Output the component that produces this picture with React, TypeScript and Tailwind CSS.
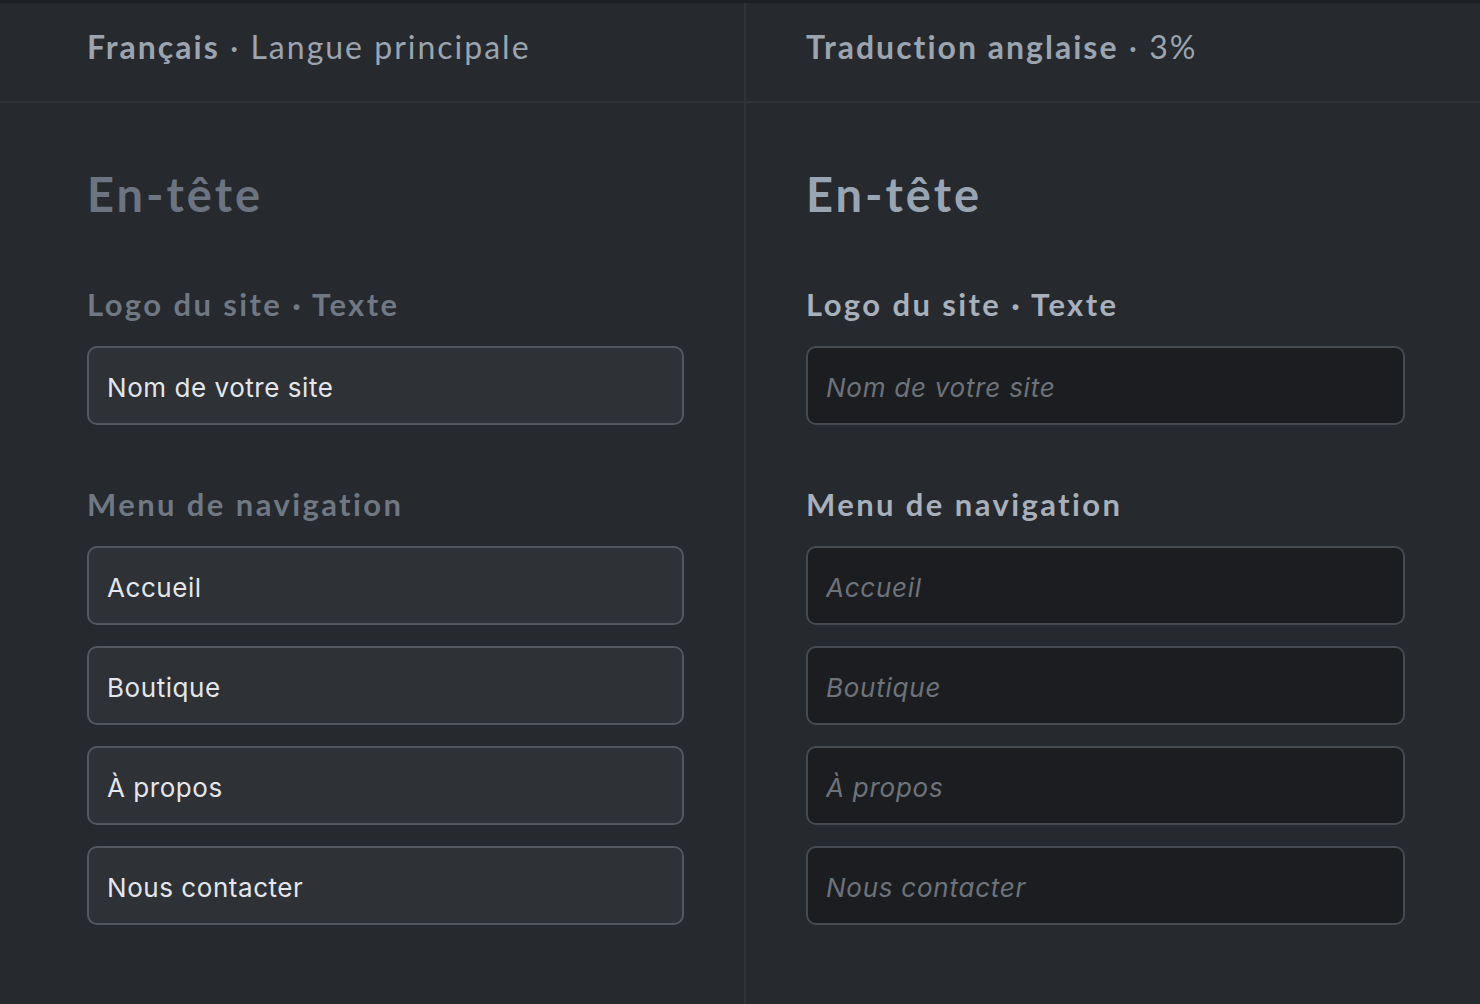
import React from 'react';

const navItems = ['Accueil', 'Boutique', 'À propos', 'Nous contacter'];

const heading = "font-['Lato','Open_Sans',sans-serif]";
const body = "font-['Inter','Roboto',sans-serif]";

function Field({ value, source }: { value: string; source: boolean }) {
  return source ? (
    <input
      readOnly
      value={value}
      className={`${body} w-[597px] h-[79px] px-[18px] pt-[3px] text-[26px] tracking-[0.55px] text-[#e4e6e9] bg-[#2e3136] border-2 border-[#53575e] rounded-[10px] outline-none`}
    />
  ) : (
    <input
      readOnly
      placeholder={value}
      className={`${body} w-[599px] h-[79px] px-[18px] pt-[3px] text-[26px] tracking-[0.75px] text-[#e4e6e9] bg-[#1c1d20] border-2 border-[#464a51] rounded-[10px] outline-none placeholder:italic placeholder:text-[#6d737b]`}
    />
  );
}

function Column({ source }: { source: boolean }) {
  const headColor = source ? 'text-[#6b7480]' : 'text-[#9aa5b3]';
  const labelColor = source ? 'text-[#6f7883]' : 'text-[#a7b0bb]';
  return (
    <div className="flex flex-col pt-[64px]">
      <h2 className={`${heading} text-[47px] leading-[55px] font-bold tracking-[3px] ${headColor}`}>En-tête</h2>

      <p className={`${heading} mt-[64px] text-[31px] leading-[36px] font-bold tracking-[2.4px] ${labelColor}`}>
        Logo du site · Texte
      </p>
      <div className="mt-[24px]">
        <Field value="Nom de votre site" source={source} />
      </div>

      <p className={`${heading} mt-[61px] text-[31px] leading-[36px] font-bold tracking-[2.4px] ${labelColor}`}>
        Menu de navigation
      </p>
      <div className="mt-[24px] flex flex-col gap-[21px]">
        {navItems.map((n) => (
          <Field key={n} value={n} source={source} />
        ))}
      </div>
    </div>
  );
}

export default function App() {
  return (
    <div className="w-[1480px] h-[1004px] overflow-hidden bg-[#26292d] border-t-[3px] border-[#1d1f22] flex">
      <div className="w-[746px] shrink-0 border-r-2 border-[#303338] flex flex-col">
        <div className="h-[100px] border-b-2 border-[#303338] flex items-center pl-[87px] pb-[10px]">
          <p className={`${heading} text-[32px] tracking-[2px] text-[#9ba4af]`}>
            <span className="font-bold">Français</span> · Langue principale
          </p>
        </div>
        <div className="pl-[87px]">
          <Column source />
        </div>
      </div>
      <div className="flex-1 flex flex-col">
        <div className="h-[100px] border-b-2 border-[#303338] flex items-center pl-[60px] pb-[10px]">
          <p className={`${heading} text-[32px] tracking-[2px] text-[#9ba4af]`}>
            <span className="font-bold">Traduction anglaise</span> · 3%
          </p>
        </div>
        <div className="pl-[60px]">
          <Column source={false} />
        </div>
      </div>
    </div>
  );
}
